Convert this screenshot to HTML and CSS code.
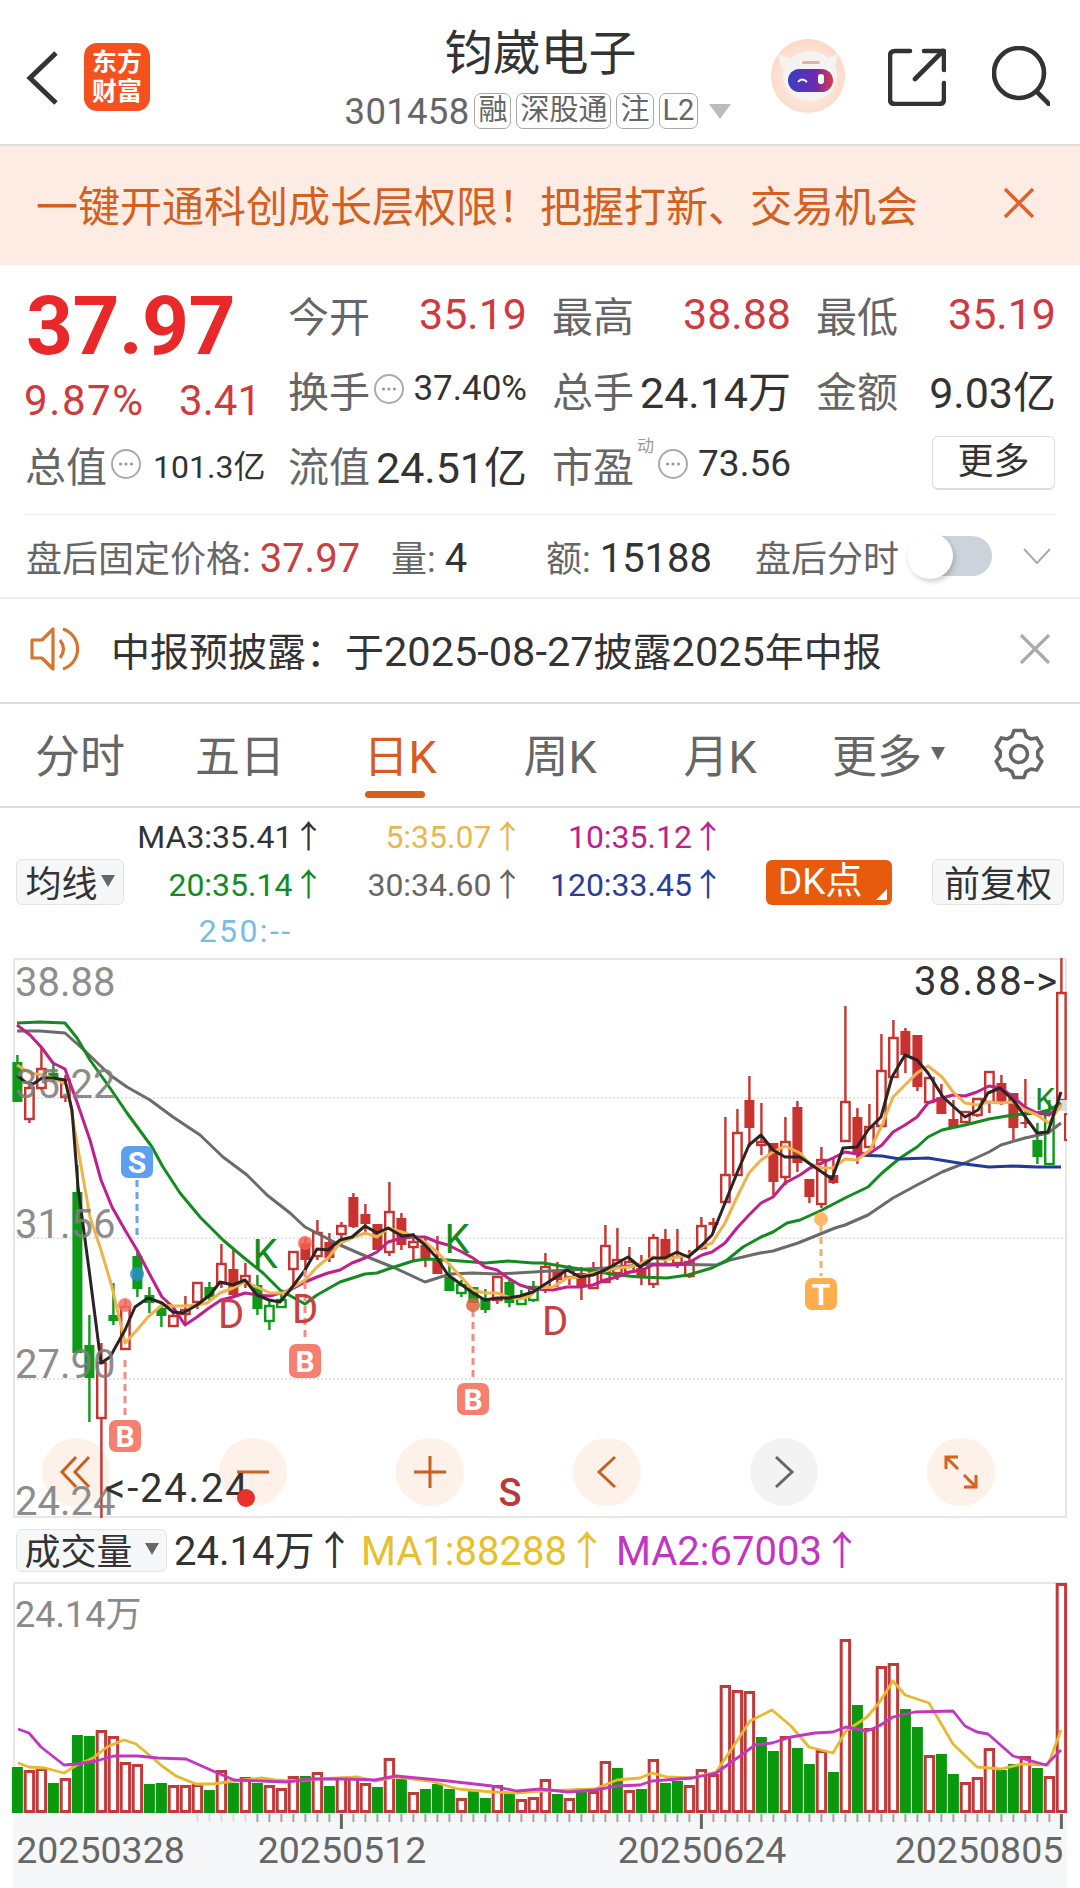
FILE: index.html
```html
<!DOCTYPE html>
<html>
<head>
    <meta charset="utf-8">
    <title>钧崴电子 301458</title>
    <link rel="stylesheet" href="styles.css">
</head>

<body>
    <svg class="sprites" width="0" height="0">
        <symbol id="icon-dots" viewBox="0 0 32 32">
            <circle cx="16" cy="16" r="14" fill="none" stroke="#aaa" stroke-width="2"/>
            <circle cx="10.5" cy="16" r="1.6" fill="#999"/>
            <circle cx="16" cy="16" r="1.6" fill="#999"/>
            <circle cx="21.5" cy="16" r="1.6" fill="#999"/>
        </symbol>
    </svg>

    <header class="topbar">
        <div class="topbar-left">
            <svg class="back" width="34" height="56" viewBox="0 0 34 56">
                <path d="M30 3 L4 28 L30 53" fill="none" stroke="#333" stroke-width="5"/>
            </svg>
            <div class="logo"><span>东方</span><span>财富</span></div>
        </div>
        <div class="title-box">
            <div class="title">钧崴电子</div>
            <div class="sub">
                <span class="code">301458</span>
                <span class="tag">融</span>
                <span class="tag">深股通</span>
                <span class="tag">注</span>
                <span class="tag">L2</span>
                <span class="sub-caret"></span>
            </div>
        </div>
        <div class="topbar-right">
            <svg class="robot" width="74" height="74" viewBox="0 0 74 74">
                <defs>
                    <radialGradient id="robotBg" cx="50%" cy="55%" r="55%">
                        <stop offset="0%" stop-color="#fff4ee"/>
                        <stop offset="100%" stop-color="#fbd9c8"/>
                    </radialGradient>
                    <linearGradient id="visor" x1="0" x2="1" y1="0" y2="0">
                        <stop offset="0%" stop-color="#3a3fc4"/>
                        <stop offset="60%" stop-color="#6a2bb0"/>
                        <stop offset="100%" stop-color="#d93a4a"/>
                    </linearGradient>
                </defs>
                <circle cx="37" cy="37" r="37" fill="url(#robotBg)"/>
                <path d="M7 15 L11 30 L20 20 Z M67 15 L63 30 L54 20 Z" fill="#f5f2f0"/>
                <ellipse cx="39" cy="37" rx="27" ry="25" fill="#f5f3f2"/>
                <rect x="31" y="22" width="18" height="3" rx="1.5" fill="#e2b48f"/>
                <rect x="17" y="30" width="45" height="23" rx="11.5" fill="url(#visor)"/>
                <path d="M27 43 q4 -5 9 0" fill="none" stroke="#fff" stroke-width="2"/>
                <rect x="47" y="35" width="6" height="10" rx="3" fill="#fff"/>
            </svg>
            <svg class="share" width="58" height="58" viewBox="0 0 58 58">
                <g fill="none" stroke="#333" stroke-width="4.6" stroke-linecap="round" stroke-linejoin="round">
                    <path d="M22 3 H7 Q2 3 2 8 V51 Q2 56 7 56 H51 Q56 56 56 51 V35"/>
                    <path d="M27 31 L55 3"/>
                    <path d="M36 3 H56 V22"/>
                </g>
            </svg>
            <svg class="search" width="58" height="60" viewBox="0 0 58 60">
                <circle cx="27" cy="27" r="25" fill="none" stroke="#333" stroke-width="4.6"/>
                <path d="M45 46 L57 58" stroke="#333" stroke-width="4.6" stroke-linecap="round"/>
            </svg>
        </div>
    </header>

    <div class="banner">
        <span>一键开通科创成长层权限！把握打新、交易机会</span>
        <svg width="32" height="32" viewBox="0 0 32 32">
            <path d="M2 2 L30 30 M30 2 L2 30" stroke="#e0642a" stroke-width="3.4"/>
        </svg>
    </div>

    <section class="quote">
        <div class="quote-main">
            <div class="price">37.97</div>
            <div class="change"><span class="pct">9.87%</span><span>3.41</span></div>
            <div class="cell cell-short">
                <span class="label">总值</span>
                <svg class="dots"><use href="#icon-dots"/></svg>
                <span class="val-s">101.3亿</span>
            </div>
        </div>
        <div class="quote-cells">
            <div class="cell"><span class="label">今开</span><span class="num red">35.19</span></div>
            <div class="cell"><span class="label">最高</span><span class="num red">38.88</span></div>
            <div class="cell"><span class="label">最低</span><span class="num red">35.19</span></div>

            <div class="cell">
                <span class="label">换手</span>
                <svg class="dots"><use href="#icon-dots"/></svg>
                <span class="val-m">37.40%</span>
            </div>
            <div class="cell"><span class="label">总手</span><span class="num">24.14万</span></div>
            <div class="cell"><span class="label">金额</span><span class="num">9.03亿</span></div>

            <div class="cell"><span class="label">流值</span><span class="num">24.51亿</span></div>
            <div class="cell">
                <span class="label">市盈</span>
                <sup class="dyn">动</sup>
                <svg class="dots"><use href="#icon-dots"/></svg>
                <span class="val-l">73.56</span>
            </div>
            <div class="cell cell-more"><span class="more-btn">更多</span></div>
        </div>
    </section>

    <div class="after-row">
        <div class="after-price">盘后固定价格: <b>37.97</b></div>
        <div class="after-vol">量: <b class="dark">4</b></div>
        <div class="after-amt">额: <b class="dark">15188</b></div>
        <div class="after-label">盘后分时</div>
        <div class="toggle"><span class="knob"></span></div>
        <svg class="after-chevron" width="28" height="16" viewBox="0 0 28 16">
            <path d="M1 1 L14 15 L27 1" fill="none" stroke="#aaa" stroke-width="2"/>
        </svg>
    </div>

    <div class="notice">
        <svg class="speaker" width="50" height="44" viewBox="0 0 50 44">
            <g fill="none" stroke="#d5752f" stroke-width="3.2" stroke-linejoin="round">
                <path d="M2 13 H12 L23 2 V42 L12 31 H2 Z"/>
                <path d="M30 13 Q37 22 30 31"/>
                <path d="M33 2 A21 21 0 0 1 33 42"/>
            </g>
        </svg>
        <span class="notice-text">中报预披露：于<span class="digits">2025-08-27</span>披露<span class="digits">2025</span>年中报</span>
        <svg width="32" height="30" viewBox="0 0 32 30">
            <path d="M2 1 L30 29 M30 1 L2 29" stroke="#aaa" stroke-width="3.2"/>
        </svg>
    </div>

    <nav class="tabs">
        <div class="tab">分时</div>
        <div class="tab">五日</div>
        <div class="tab"><span class="tab-active">日K</span></div>
        <div class="tab">周K</div>
        <div class="tab">月K</div>
        <div class="tab tab-more">更多<span class="tab-caret"></span></div>
        <div class="tab">
            <svg class="gear" width="52" height="52" viewBox="0 0 52 52">
                <path d="M18.9 8.4 L21 2.5 H31 L33.1 8.4 L37.7 11 L43.8 9.9 L48.8 18.6 L44.8 23.4 V28.6 L48.8 33.4 L43.8 42.1 L37.7 41 L33.1 43.6 L31 49.5 H21 L18.9 43.6 L14.3 41 L8.2 42.1 L3.2 33.4 L7.2 28.6 V23.4 L3.2 18.6 L8.2 9.9 L14.3 11 Z" fill="none" stroke="#666" stroke-width="3.6" stroke-linejoin="round"/>
                <circle cx="26" cy="26" r="8.5" fill="none" stroke="#666" stroke-width="3.6"/>
            </svg>
        </div>
    </nav>

    <div class="ma-bar">
        <div class="soft-btn ma-select">均线<span class="caret"></span></div>
        <div class="ma-grid">
            <span class="c-ma3">MA3:35.41↑</span>
            <span class="c-ma5">5:35.07↑</span>
            <span class="c-ma10">10:35.12↑</span>
            <span class="c-ma20">20:35.14↑</span>
            <span class="c-ma30">30:34.60↑</span>
            <span class="c-ma120">120:33.45↑</span>
            <span class="c-ma250">250:--</span>
        </div>
        <div class="dk-btn">DK点</div>
        <div class="soft-btn adjust-btn">前复权</div>
    </div>

    <div class="pane pane-kline">
        <div class="chart-tools">
            <div class="tool">
                <svg width="34" height="34" viewBox="0 0 34 34"><path d="M17 2 L3 17 L17 32 M30 2 L16 17 L30 32" fill="none" stroke="#c9601f" stroke-width="3"/></svg>
            </div>
            <div class="tool">
                <svg width="34" height="34" viewBox="0 0 34 34"><path d="M1 17 H33" stroke="#c9601f" stroke-width="3"/></svg>
            </div>
            <div class="tool">
                <svg width="34" height="34" viewBox="0 0 34 34"><path d="M1 17 H33 M17 1 V33" stroke="#c9601f" stroke-width="3"/></svg>
            </div>
            <div class="tool">
                <svg width="34" height="34" viewBox="0 0 34 34"><path d="M25 2 L9 17 L25 32" fill="none" stroke="#c9601f" stroke-width="3"/></svg>
            </div>
            <div class="tool tool-grey">
                <svg width="34" height="34" viewBox="0 0 34 34"><path d="M9 2 L25 17 L9 32" fill="none" stroke="#666" stroke-width="3"/></svg>
            </div>
            <div class="tool">
                <svg width="34" height="34" viewBox="0 0 34 34">
                    <g fill="none" stroke="#d8601a" stroke-width="3"><path d="M2 14 V2 H14 M2 2 L14 14"/><path d="M32 20 V32 H20 M32 32 L20 20"/></g>
                </svg>
            </div>
        </div>
        <svg id="kline" viewBox="13 958 1054 560" width="1054" height="560"></svg>
    </div>

    <div class="vol-bar">
        <div class="soft-btn vol-select">成交量<span class="caret"></span></div>
        <span class="vol-now">24.14万↑</span>
        <span class="vol-ma1">MA1:88288↑</span>
        <span class="vol-ma2">MA2:67003↑</span>
    </div>

    <div class="pane pane-vol">
        <svg id="volume" viewBox="13 1582 1054 231" width="1054" height="231"></svg>
    </div>

    <div class="axis">
        <svg id="axis" viewBox="13 1813 1054 75" width="1054" height="75"></svg>
    </div>

    <script src="chart.js"></script>
</body>
</html>
```

FILE: styles.css
```css
* {
    box-sizing: border-box;
}

body {
    margin: 0;
    width: 1080px;
    height: 1888px;
    overflow: hidden;
    background: #fff;
    color: #333;
    font-family: Roboto, "Noto Sans CJK SC", sans-serif;
}

.sprites {
    position: absolute;
}

/* top bar */
.topbar {
    display: grid;
    grid-template-columns: 1fr auto 1fr;
    height: 146px;
    border-bottom: 2px solid #ddd;
}
.topbar-left {
    display: flex;
    align-items: center;
    padding-left: 26px;
}
.back {
    margin-right: 24px;
    margin-top: 12px;
}
.logo {
    display: flex;
    flex-direction: column;
    align-items: center;
    justify-content: center;
    width: 66px;
    height: 68px;
    margin-top: 10px;
    border-radius: 13px;
    background: #f4511e;
    color: #fff;
    font-size: 25px;
    font-weight: 700;
    line-height: 29px;
}
.title-box {
    display: flex;
    flex-direction: column;
    align-items: center;
    padding-top: 22px;
    padding-right: 4px;
}
.title {
    height: 64px;
    margin-left: 5px;
    font-size: 48px;
    line-height: 64px;
    color: #333;
}
.sub {
    display: flex;
    align-items: center;
    margin-top: 7px;
    height: 36px;
    color: #666;
}
.code {
    margin-right: 5px;
    font-size: 36.5px;
    letter-spacing: .3px;
}
.tag {
    height: 36px;
    margin-right: 5px;
    padding: 0 3px;
    border: 1.5px solid #aaa;
    border-radius: 7px;
    font-size: 29px;
    line-height: 33px;
}
.sub-caret {
    width: 0;
    height: 0;
    margin-left: 6px;
    border-left: 11px solid transparent;
    border-right: 11px solid transparent;
    border-top: 15px solid #bbb;
}
.topbar-right {
    display: flex;
    align-items: center;
    justify-content: flex-end;
    padding-right: 30px;
}
.robot {
    margin-right: 43px;
    margin-top: 8px;
}
.share {
    margin-right: 46px;
    margin-top: 10px;
}
.search {
    margin-top: 8px;
}

/* promo */
.banner {
    display: flex;
    align-items: center;
    justify-content: space-between;
    height: 119px;
    padding: 0 45px 5px 36px;
    background: #fcece3;
    color: #d2601f;
    font-size: 42px;
}

/* quote */
.quote {
    display: flex;
    height: 249px;
    padding: 11px 0 0 26px;
}
.quote-main {
    width: 263px;
}
.price {
    height: 100px;
    color: #e8282b;
    font-size: 82px;
    font-weight: 700;
    line-height: 100px;
    letter-spacing: -.6px;
}
.change {
    display: flex;
    justify-content: space-between;
    width: 237px;
    height: 50px;
    margin-left: -2px;
    color: #d0393e;
    font-size: 42px;
    line-height: 50px;
}
.pct {
    letter-spacing: 1.6px;
}
.quote-cells {
    display: grid;
    grid-template-columns: 239px 239px 240px;
    grid-auto-rows: 75px;
    column-gap: 25px;
    margin-left: -1px;
}
.cell {
    display: flex;
    align-items: center;
    justify-content: space-between;
    height: 75px;
}
.cell-short {
    justify-content: flex-start;
    margin-left: -1px;
}
.cell-more {
    justify-content: flex-end;
}
.label {
    color: #666;
    font-size: 41px;
    white-space: nowrap;
}
.num {
    color: #333;
    font-size: 43px;
    white-space: nowrap;
}
.num.red {
    color: #d0393e;
}
.dots {
    width: 32px;
    height: 32px;
    flex: none;
    margin-left: 3px;
}
.val-s {
    margin-left: 11px;
    font-size: 32px;
    white-space: nowrap;
}
.val-m {
    margin-left: auto;
    font-size: 35px;
}
.val-l {
    margin-left: auto;
    font-size: 37px;
}
.dyn {
    align-self: flex-start;
    margin: 10px 0 0 3px;
    color: #999;
    font-size: 17px;
    line-height: 20px;
}
.more-btn {
    width: 123px;
    height: 54px;
    margin-right: 1px;
    margin-top: -2px;
    border: 1px solid #ddd;
    border-bottom-width: 2px;
    border-radius: 6px;
    color: #333;
    font-size: 36px;
    line-height: 50px;
    text-align: center;
}

/* after hours */
.after-row {
    position: relative;
    display: flex;
    align-items: center;
    height: 85px;
    margin: 0;
    padding-left: 26px;
    border-bottom: 2px solid #eee;
    color: #666;
    font-size: 36px;
}
.after-row::before {
    content: "";
    position: absolute;
    top: 0;
    left: 24px;
    right: 24px;
    border-top: 1px solid #eee;
}
.after-row b {
    color: #c94040;
    font-size: 40px;
    font-weight: 400;
}
.after-row b.dark {
    color: #333;
}
.after-price {
    width: 365px;
}
.after-vol {
    width: 155px;
}
.after-amt {
    width: 209px;
}
.toggle {
    width: 85px;
    height: 40px;
    margin-left: 8px;
    border-radius: 20px;
    background: #ccd3da;
}
.knob {
    display: block;
    width: 46px;
    height: 46px;
    margin-top: -3px;
    border-radius: 50%;
    background: #fff;
    box-shadow: 2px 3px 5px rgba(0, 0, 0, .18);
}
.after-chevron {
    margin-left: 31px;
}

/* notice */
.notice {
    display: flex;
    align-items: center;
    height: 105px;
    padding-left: 30px;
    padding-bottom: 3px;
    border-bottom: 2px solid #ddd;
}
.speaker {
    flex: none;
}
.notice-text {
    width: 908px;
    margin-left: 31px;
    font-size: 39px;
    color: #333;
    white-space: nowrap;
}
.digits {
    font-size: 41.5px;
}

/* tabs */
.tabs {
    display: grid;
    grid-template-columns: repeat(6, 160px) 1fr;
    height: 104px;
    border-bottom: 2px solid #ddd;
}
.tab {
    display: flex;
    align-items: center;
    justify-content: center;
    padding-bottom: 3px;
    color: #666;
    font-size: 45px;
}
.tab-more {
    padding-left: 17px;
}
.gear {
    margin-right: 2px;
}
.tab-active {
    position: relative;
    color: #d45d1f;
}
.tab-active::after {
    content: "";
    position: absolute;
    left: 2px;
    bottom: -12px;
    width: 60px;
    height: 7px;
    border-radius: 4px;
    background: #d45d1f;
}
.tab-caret {
    width: 0;
    height: 0;
    margin-left: 9px;
    border-left: 7px solid transparent;
    border-right: 7px solid transparent;
    border-top: 13px solid #666;
}

/* indicator bar */
.ma-bar {
    display: flex;
    align-items: center;
    height: 150px;
    padding: 0 0 2px 16px;
}
.soft-btn {
    display: flex;
    align-items: center;
    justify-content: center;
    height: 46px;
    padding-bottom: 3px;
    border: 1px solid #e3e3e3;
    border-radius: 6px;
    background: #f6f7f9;
    color: #333;
    font-size: 36px;
    white-space: nowrap;
}
.ma-select {
    width: 108px;
}
.caret {
    width: 0;
    height: 0;
    margin-left: 3px;
    border-left: 7px solid transparent;
    border-right: 7px solid transparent;
    border-top: 12px solid #666;
}
.ma-grid {
    display: grid;
    grid-template-columns: 200.5px 199px 200.5px;
    grid-auto-rows: 48.5px;
    align-items: center;
    width: 600px;
    font-size: 32px;
    text-align: right;
    white-space: nowrap;
}
.c-ma3 { color: #333; }
.c-ma5 { color: #e8b84f; }
.c-ma10 { color: #c0208a; }
.c-ma20 { color: #128c1e; }
.c-ma30 { color: #666; }
.c-ma120 { color: #2a3e98; }
.c-ma250 { color: #78bde8; padding-right: 32px; letter-spacing: 2.4px; }
.dk-btn {
    position: relative;
    width: 126px;
    height: 45px;
    margin-left: 42px;
    padding-left: 12px;
    border-radius: 6px;
    background: #e85a0c;
    color: #fff;
    font-size: 37px;
    line-height: 44px;
    white-space: nowrap;
}
.dk-btn::after {
    content: "";
    position: absolute;
    right: 5px;
    bottom: 5px;
    border-left: 11px solid transparent;
    border-bottom: 11px solid #fff;
}
.adjust-btn {
    width: 132px;
    margin-left: 40px;
    font-size: 36px;
}

/* charts */
.pane {
    position: relative;
    width: 1054px;
    margin-left: 13px;
    outline: 2px solid #e6e6e6;
    outline-offset: -2px;
}
.pane > svg {
    position: relative;
    display: block;
    overflow: visible;
}
.pane-kline {
    height: 560px;
}
.pane-vol {
    height: 231px;
}
.chart-tools {
    position: absolute;
    top: 480px;
    left: 29px;
    display: flex;
    gap: 109px;
}
.tool {
    display: flex;
    align-items: center;
    justify-content: center;
    width: 68px;
    height: 68px;
    border-radius: 50%;
    background: #fdf1ea;
}
.tool-grey {
    background: #f3f3f3;
}
.chart-text {
    font-family: Roboto, "Noto Sans CJK SC", sans-serif;
}
.t-price { font-size: 40px; fill: rgba(125, 125, 125, .9); }
.t-mark { font-size: 40px; fill: #333; letter-spacing: 1.8px; }
.t-k { font-size: 40px; fill: #128c1e; }
.t-k-small { font-size: 32px; fill: #128c1e; }
.t-d { font-size: 40px; fill: #c94040; }
.t-s { font-size: 38px; fill: #b93a3a; font-weight: 500; }
.t-badge { font-size: 30px; font-weight: 700; fill: #fff; }
.t-vol { font-size: 36px; fill: #8a8a8a; }
.t-date { font-size: 37.5px; fill: #666; }

.vol-bar {
    display: flex;
    align-items: center;
    height: 64px;
    padding-left: 16px;
    font-size: 40px;
    white-space: nowrap;
}
.vol-select {
    width: 151px;
    height: 43px;
    margin-right: 7px;
    font-size: 36px;
}
.vol-select .caret {
    margin-left: 12px;
}
.vol-now,
.vol-ma1,
.vol-ma2 {
    margin-bottom: 5px;
}
.vol-now {
    width: 187px;
}
.vol-ma1 {
    width: 255px;
    color: #e6c02f;
}
.vol-ma2 {
    color: #c136c1;
}
.axis {
    width: 1054px;
    height: 75px;
    margin-left: 13px;
    background: #f6f7f9;
}
.axis svg {
    display: block;
}
```

FILE: chart.js
```js
// Kline and volume charts. All y values are in page pixels, the svg viewBox is set to match.
const X0 = 17.4;
const STEP = 12;
const xAt = i => X0 + STEP * i;

const RED = '#c9332f';
const GREEN = '#0d9a16';

// kind: r solid red, h hollow red, g solid green, o hollow green
// [kind, bodyTop, bodyBottom, wickTop, wickBottom]
const candles = [
    ['g', 1062, 1102, 1055, 1102], ['h', 1088, 1119, 1085, 1123], ['h', 1069, 1088, 1048, 1090], ['g', 1073, 1080, 1062, 1082],
    ['h', 1080, 1097, 1075, 1102], ['g', 1192, 1353, 1165, 1353], ['g', 1345, 1378, 1315, 1422], ['h', 1363, 1418, 1343, 1518],
    ['g', 1315, 1321, 1283, 1325], ['h', 1307, 1349, 1300, 1349], ['g', 1256, 1289, 1250, 1297], ['g', 1295, 1303, 1287, 1313],
    ['g', 1308, 1316, 1303, 1327], ['h', 1316, 1326, 1312, 1326], ['h', 1310, 1314, 1296, 1325], ['h', 1283, 1302, 1282, 1309],
    ['g', 1287, 1297, 1282, 1300], ['h', 1264, 1283, 1244, 1288], ['r', 1269, 1295, 1250, 1297], ['h', 1276, 1282, 1263, 1288],
    ['g', 1285, 1309, 1275, 1315], ['o', 1306, 1321, 1300, 1330], ['o', 1300, 1307, 1292, 1307], ['h', 1252, 1269, 1252, 1285],
    ['r', 1243, 1260, 1238, 1273], ['h', 1233, 1256, 1220, 1260], ['r', 1242, 1258, 1233, 1262], ['h', 1226, 1234, 1222, 1245],
    ['r', 1197, 1227, 1193, 1228], ['r', 1214, 1224, 1204, 1235], ['r', 1224, 1250, 1224, 1250], ['h', 1212, 1252, 1182, 1256],
    ['r', 1218, 1245, 1213, 1250], ['h', 1242, 1247, 1233, 1260], ['r', 1245, 1258, 1237, 1267], ['r', 1258, 1274, 1236, 1274],
    ['g', 1277, 1291, 1263, 1291], ['o', 1285, 1293, 1280, 1297], ['g', 1287, 1303, 1287, 1303], ['g', 1298, 1310, 1289, 1313],
    ['h', 1277, 1300, 1277, 1304], ['g', 1282, 1303, 1280, 1307], ['o', 1298, 1304, 1290, 1304], ['o', 1287, 1300, 1281, 1302],
    ['h', 1267, 1287, 1253, 1293], ['r', 1270, 1280, 1262, 1287], ['h', 1270, 1277, 1265, 1285], ['r', 1273, 1287, 1267, 1300],
    ['h', 1273, 1288, 1262, 1288], ['h', 1246, 1282, 1225, 1282], ['h', 1260, 1273, 1228, 1280], ['h', 1262, 1272, 1247, 1273],
    ['r', 1268, 1277, 1255, 1285], ['h', 1238, 1284, 1234, 1288], ['r', 1239, 1257, 1229, 1265], ['h', 1257, 1263, 1229, 1268],
    ['h', 1262, 1276, 1250, 1278], ['h', 1226, 1248, 1217, 1250], ['r', 1222, 1225, 1218, 1233], ['h', 1175, 1202, 1117, 1203],
    ['h', 1133, 1175, 1109, 1175], ['r', 1100, 1128, 1076, 1147], ['h', 1142, 1145, 1103, 1155], ['r', 1143, 1182, 1143, 1195],
    ['h', 1142, 1177, 1117, 1185], ['r', 1107, 1163, 1101, 1172], ['r', 1179, 1197, 1179, 1203], ['h', 1160, 1204, 1147, 1208],
    ['r', 1175, 1183, 1157, 1184], ['h', 1102, 1141, 1006, 1141], ['r', 1117, 1153, 1108, 1164], ['h', 1127, 1147, 1104, 1148],
    ['h', 1071, 1126, 1034, 1126], ['h', 1038, 1077, 1020, 1077], ['r', 1031, 1055, 1028, 1073], ['r', 1035, 1087, 1035, 1091],
    ['h', 1078, 1102, 1078, 1103], ['r', 1097, 1114, 1084, 1114], ['r', 1119, 1127, 1100, 1127], ['h', 1112, 1122, 1112, 1122],
    ['h', 1099, 1115, 1098, 1117], ['h', 1072, 1102, 1072, 1113], ['r', 1083, 1103, 1075, 1105], ['r', 1093, 1128, 1093, 1140],
    ['r', 1122, 1124, 1079, 1128], ['g', 1140, 1157, 1123, 1164], ['o', 1113, 1164, 1100, 1164], ['h', 993, 1100, 958, 1100],
];

const maLines = [
    { color: '#6b6b6b', points: [[17,1031],[40,1031],[65,1033],[84,1050],[110,1075],[127,1087],[150,1100],[173,1117],[200,1135],[223,1157],[247,1175],[267,1195],[290,1213],[305,1227],[340,1245],[370,1258],[395,1268],[425,1282],[450,1274],[473,1273],[497,1274],[533,1272],[567,1270],[605,1268],[653,1264],[717,1265],[730,1260],[760,1253],[773,1251],[798,1243],[835,1228],[845,1225],[868,1215],[893,1198],[917,1185],[942,1172],[965,1163],[989,1152],[1001,1145],[1025,1138],[1048,1133],[1061,1123]] },
    { color: '#128c1e', points: [[17,1023],[40,1022],[65,1023],[77,1038],[90,1060],[110,1088],[127,1113],[152,1147],[163,1167],[180,1193],[200,1217],[223,1240],[243,1257],[263,1273],[280,1290],[305,1304],[317,1295],[340,1282],[365,1274],[377,1273],[388,1269],[413,1261],[425,1259],[448,1260],[473,1262],[485,1263],[497,1262],[508,1261],[533,1263],[543,1263],[567,1267],[593,1271],[617,1275],[640,1277],[667,1278],[688,1275],[712,1268],[727,1260],[743,1247],[761,1237],[773,1232],[787,1223],[800,1220],[822,1210],[845,1198],[868,1187],[882,1173],[900,1158],[917,1147],[928,1137],[942,1130],[965,1125],[989,1119],[1013,1115],[1037,1113],[1049,1110],[1061,1103]] },
    { color: '#1f3a9a', points: [[857,1155],[882,1156],[900,1159],[928,1158],[965,1164],[989,1167],[1013,1166],[1037,1167],[1061,1167]] },
    { color: '#c0208a', points: [[17,1025],[30,1035],[42,1048],[53,1063],[65,1069],[78,1105],[90,1140],[101,1180],[112,1207],[125,1230],[137,1250],[149,1273],[162,1297],[173,1307],[185,1325],[197,1317],[209,1308],[221,1300],[233,1297],[245,1293],[257,1295],[270,1296],[290,1290],[305,1282],[317,1277],[328,1273],[340,1270],[352,1263],[365,1258],[377,1252],[388,1242],[402,1238],[413,1237],[425,1237],[437,1242],[448,1245],[462,1252],[473,1258],[485,1267],[497,1270],[508,1278],[520,1285],[533,1289],[553,1290],[567,1287],[580,1287],[593,1285],[605,1280],[617,1277],[630,1272],[642,1270],[653,1265],[665,1265],[677,1265],[688,1263],[702,1255],[712,1252],[725,1243],[737,1228],[749,1215],[761,1203],[773,1197],[785,1183],[800,1175],[810,1168],[822,1163],[833,1158],[845,1152],[857,1154],[870,1153],[882,1145],[893,1132],[905,1125],[917,1117],[928,1103],[942,1098],[953,1095],[965,1096],[977,1092],[989,1086],[1001,1088],[1013,1097],[1025,1107],[1037,1113],[1049,1115],[1061,1105]] },
    { color: '#f0b24c', points: [[17,1065],[30,1073],[43,1075],[53,1078],[67,1085],[77,1143],[90,1217],[101,1250],[112,1287],[125,1343],[137,1330],[148,1317],[162,1305],[173,1306],[185,1306],[197,1305],[207,1303],[220,1293],[233,1288],[245,1282],[257,1287],[270,1293],[283,1293],[305,1280],[317,1267],[328,1258],[340,1243],[352,1238],[365,1233],[377,1237],[388,1228],[402,1232],[413,1236],[425,1242],[437,1252],[448,1263],[462,1278],[473,1290],[485,1293],[497,1293],[508,1297],[520,1299],[530,1296],[538,1288],[553,1287],[567,1278],[580,1277],[593,1273],[605,1271],[617,1268],[630,1267],[642,1263],[653,1257],[665,1260],[677,1257],[688,1255],[702,1247],[712,1243],[725,1223],[737,1197],[749,1173],[761,1160],[773,1152],[785,1146],[800,1153],[810,1164],[822,1168],[833,1168],[845,1159],[857,1160],[870,1150],[882,1125],[893,1097],[905,1085],[917,1073],[928,1066],[942,1077],[953,1092],[965,1103],[977,1105],[989,1102],[1001,1103],[1013,1102],[1025,1110],[1037,1115],[1049,1123],[1061,1105]] },
    { color: '#2b2424', points: [[17,1075],[25,1082],[33,1084],[42,1078],[53,1078],[65,1080],[72,1110],[78,1187],[90,1277],[101,1363],[110,1357],[125,1330],[135,1307],[148,1298],[162,1303],[173,1312],[183,1313],[197,1305],[210,1295],[220,1282],[233,1285],[245,1280],[257,1295],[269,1300],[280,1302],[290,1290],[305,1270],[317,1249],[328,1250],[340,1240],[352,1237],[365,1226],[377,1233],[388,1228],[402,1236],[413,1235],[425,1245],[437,1258],[448,1275],[462,1285],[473,1293],[485,1300],[497,1298],[508,1298],[520,1296],[533,1292],[567,1270],[580,1277],[593,1275],[605,1270],[628,1257],[640,1267],[653,1258],[665,1258],[677,1252],[688,1257],[702,1245],[712,1235],[725,1203],[737,1173],[749,1145],[761,1135],[773,1150],[785,1157],[800,1157],[832,1179],[843,1148],[857,1147],[868,1130],[881,1117],[892,1077],[905,1055],[917,1060],[928,1073],[943,1097],[965,1117],[978,1110],[988,1093],[1000,1088],[1013,1100],[1037,1133],[1048,1132],[1061,1092]] },
];

const priceLabels = [['38.88', 996], ['35.22', 1098], ['31.56', 1238], ['27.90', 1378], ['24.24', 1515]];
const letters = [
    ['K', 265, 1268, 't-k'], ['K', 457, 1253, 't-k'], ['K', 1045, 1110, 't-k-small'],
    ['D', 231, 1328, 't-d'], ['D', 305, 1323, 't-d'], ['D', 555, 1335, 't-d'],
    ['S', 510, 1506, 't-s'],
];
// [letter, x, badge top, badge height, dash from, dash to, dot y, badge colour, dash colour, dot colour]
const signals = [
    ['S', 137, 1146, 32, 1180, 1238, 1274, '#5f9ff0', '#6ba3e8', '#2a8fc8'],
    ['B', 125, 1420, 32, 1360, 1418, 1305, '#f5806f', '#ef8f83', '#f2705f'],
    ['B', 305, 1344, 34, 1270, 1342, 1243, '#f5806f', '#ef8f83', '#f2604f'],
    ['B', 473, 1383, 32, 1310, 1381, 1305, '#f5806f', '#ef8f83', '#d9653f'],
    ['T', 821, 1278, 32, 1225, 1276, 1219, '#ffad4d', '#f3b066', '#ffad4d'],
];

// [hollow, height above base]
const volumes = [
    [0,46],[1,43],[1,45],[0,30],[1,35],[0,78],[0,77],[1,83],[1,77],[1,51],[1,49],[0,29],[0,30],[1,28],[1,28],[1,29],[0,23],[1,43],[0,30],[1,36],[0,30],[1,28],
    [1,25],[1,37],[0,37],[1,41],[0,27],[1,36],[1,36],[1,30],[0,26],[1,55],[0,34],[1,21],[0,24],[0,29],[0,24],[1,15],[0,22],[0,15],[1,28],[0,19],[1,14],[1,16],
    [1,34],[0,19],[1,15],[0,25],[1,22],[1,52],[0,45],[1,23],[0,24],[1,54],[0,30],[0,32],[1,28],[1,44],[1,39],[1,128],[1,123],[1,122],[0,76],[0,62],[1,77],[0,65],
    [0,49],[1,63],[0,41],[1,174],[0,108],[1,85],[1,147],[1,150],[0,104],[0,86],[1,58],[0,59],[0,39],[1,31],[1,36],[1,65],[0,43],[0,49],[1,57],[0,45],[1,37],[1,230],
];
const volYellow = [[18,1763],[29,1767],[45,1768],[64,1773],[77,1765],[93,1758],[107,1747],[124,1740],[136,1744],[148,1754],[162,1766],[176,1776],[196,1784],[213,1784],[234,1781],[262,1778],[275,1780],[293,1781],[317,1779],[358,1777],[375,1781],[396,1777],[430,1781],[458,1789],[492,1792],[517,1793],[540,1791],[595,1789],[617,1780],[640,1778],[652,1773],[667,1777],[692,1778],[716,1772],[733,1747],[750,1721],[772,1710],[791,1726],[809,1747],[833,1753],[846,1731],[867,1717],[879,1703],[893,1681],[905,1695],[929,1703],[953,1744],[977,1767],[1001,1769],[1022,1764],[1048,1765],[1061,1730]];
const volMagenta = [[18,1729],[29,1733],[41,1747],[64,1765],[77,1764],[96,1761],[114,1756],[138,1756],[158,1758],[186,1759],[213,1771],[234,1780],[262,1781],[286,1782],[310,1779],[344,1779],[375,1780],[396,1776],[448,1781],[492,1786],[517,1791],[540,1789],[568,1792],[595,1790],[617,1786],[640,1785],[652,1781],[692,1778],[716,1773],[733,1761],[755,1745],[772,1743],[791,1737],[815,1733],[833,1732],[846,1727],[867,1731],[879,1726],[893,1717],[915,1712],[953,1711],[965,1726],[977,1732],[988,1734],[1013,1756],[1046,1765],[1061,1750]];

const dates = [['20250328', 100.5], ['20250512', 342], ['20250624', 702], ['20250805', 979]];

function el(parent, tag, attrs, text) {
    const node = document.createElementNS('http://www.w3.org/2000/svg', tag);
    Object.keys(attrs).forEach(key => node.setAttribute(key, attrs[key]));
    if (text) node.textContent = text;
    parent.appendChild(node);
    return node;
}

function label(parent, text, x, y, cls, anchor) {
    return el(parent, 'text', { x, y, class: 'chart-text ' + cls, 'text-anchor': anchor || 'start' }, text);
}

function line(parent, x1, y1, x2, y2, stroke, width, dash) {
    const attrs = { x1, y1, x2, y2, stroke, 'stroke-width': width };
    if (dash) attrs['stroke-dasharray'] = dash;
    return el(parent, 'line', attrs);
}

function polyline(parent, points, stroke, width) {
    return el(parent, 'polyline', {
        points: points.map(p => p.join(',')).join(' '),
        fill: 'none',
        stroke,
        'stroke-width': width,
        'stroke-linejoin': 'round',
    });
}

function drawCandle(svg, candle, i) {
    const [kind, top, bottom, wickTop, wickBottom] = candle;
    const x = xAt(i);
    const color = (kind === 'g' || kind === 'o') ? GREEN : RED;
    line(svg, x, wickTop, x, wickBottom, color, 2.4);
    if (kind === 'r' || kind === 'g') {
        el(svg, 'rect', { x: x - 5, y: top, width: 10, height: bottom - top, fill: color });
    } else {
        el(svg, 'rect', { x: x - 4.2, y: top, width: 8.4, height: bottom - top, fill: '#fff', stroke: color, 'stroke-width': 2.4 });
    }
}

function drawSignal(svg, s) {
    const [letter, x, top, height, dashFrom, dashTo, dotY, fill, dashColor, dotColor] = s;
    line(svg, x, dashFrom, x, dashTo, dashColor, 3, '7 5');
    el(svg, 'circle', { cx: x, cy: dotY, r: 7, fill: dotColor, opacity: .85 });
    el(svg, 'rect', { x: x - 16, y: top, width: 32, height, rx: 7, fill });
    label(svg, letter, x, top + height / 2 + 11, 't-badge', 'middle');
}

function drawKline() {
    const svg = document.getElementById('kline');
    [1098, 1238, 1379].forEach(y => line(svg, 13, y, 1067, y, '#dcdcdc', 1.5, '2 2'));
    candles.forEach((c, i) => drawCandle(svg, c, i));
    // next bar is cut off by the pane edge
    el(svg, 'rect', { x: 1058, y: 1100, width: 9, height: 11, fill: '#ddd' });
    el(svg, 'path', { d: 'M1067 1114 H1065 V1140 H1067', fill: 'none', stroke: RED, 'stroke-width': 2 });
    maLines.forEach(l => polyline(svg, l.points, l.color, 3));
    signals.forEach(s => drawSignal(svg, s));
    letters.forEach(l => label(svg, l[0], l[1], l[2], l[3], 'middle'));
    priceLabels.forEach(p => label(svg, p[0], 15, p[1], 't-price'));
    label(svg, '38.88->', 1059, 995, 't-mark', 'end');
    label(svg, '<-24.24', 105, 1502, 't-mark');
    el(svg, 'circle', { cx: 246, cy: 1498, r: 9, fill: '#e8312a' });
}

function drawVolume() {
    const svg = document.getElementById('volume');
    const base = 1813;
    volumes.forEach((v, i) => {
        const x = xAt(i);
        if (v[0]) {
            el(svg, 'rect', { x: x - 4.2, y: base - v[1] + 1.5, width: 8.4, height: v[1] - 3, fill: '#fff', stroke: '#c0393b', 'stroke-width': 3 });
        } else {
            el(svg, 'rect', { x: x - 5.5, y: base - v[1], width: 11, height: v[1], fill: '#0a980f' });
        }
    });
    polyline(svg, volYellow, '#e8b92e', 2.8);
    polyline(svg, volMagenta, '#c236c0', 2.8);
    label(svg, '24.14万', 15, 1627, 't-vol');
}

function drawAxis() {
    const svg = document.getElementById('axis');
    for (let i = 15; i < 88; i++) {
        const x = xAt(i);
        const major = i % 30 === 27;
        const color = major ? '#666' : (i < 20 ? '#ddd' : '#a5a5a5');
        line(svg, x, 1814, x, major ? 1829 : 1822, color, major ? 3 : 2);
    }
    dates.forEach(d => label(svg, d[0], d[1], 1863, 't-date', 'middle'));
}

drawKline();
drawVolume();
drawAxis();
```
